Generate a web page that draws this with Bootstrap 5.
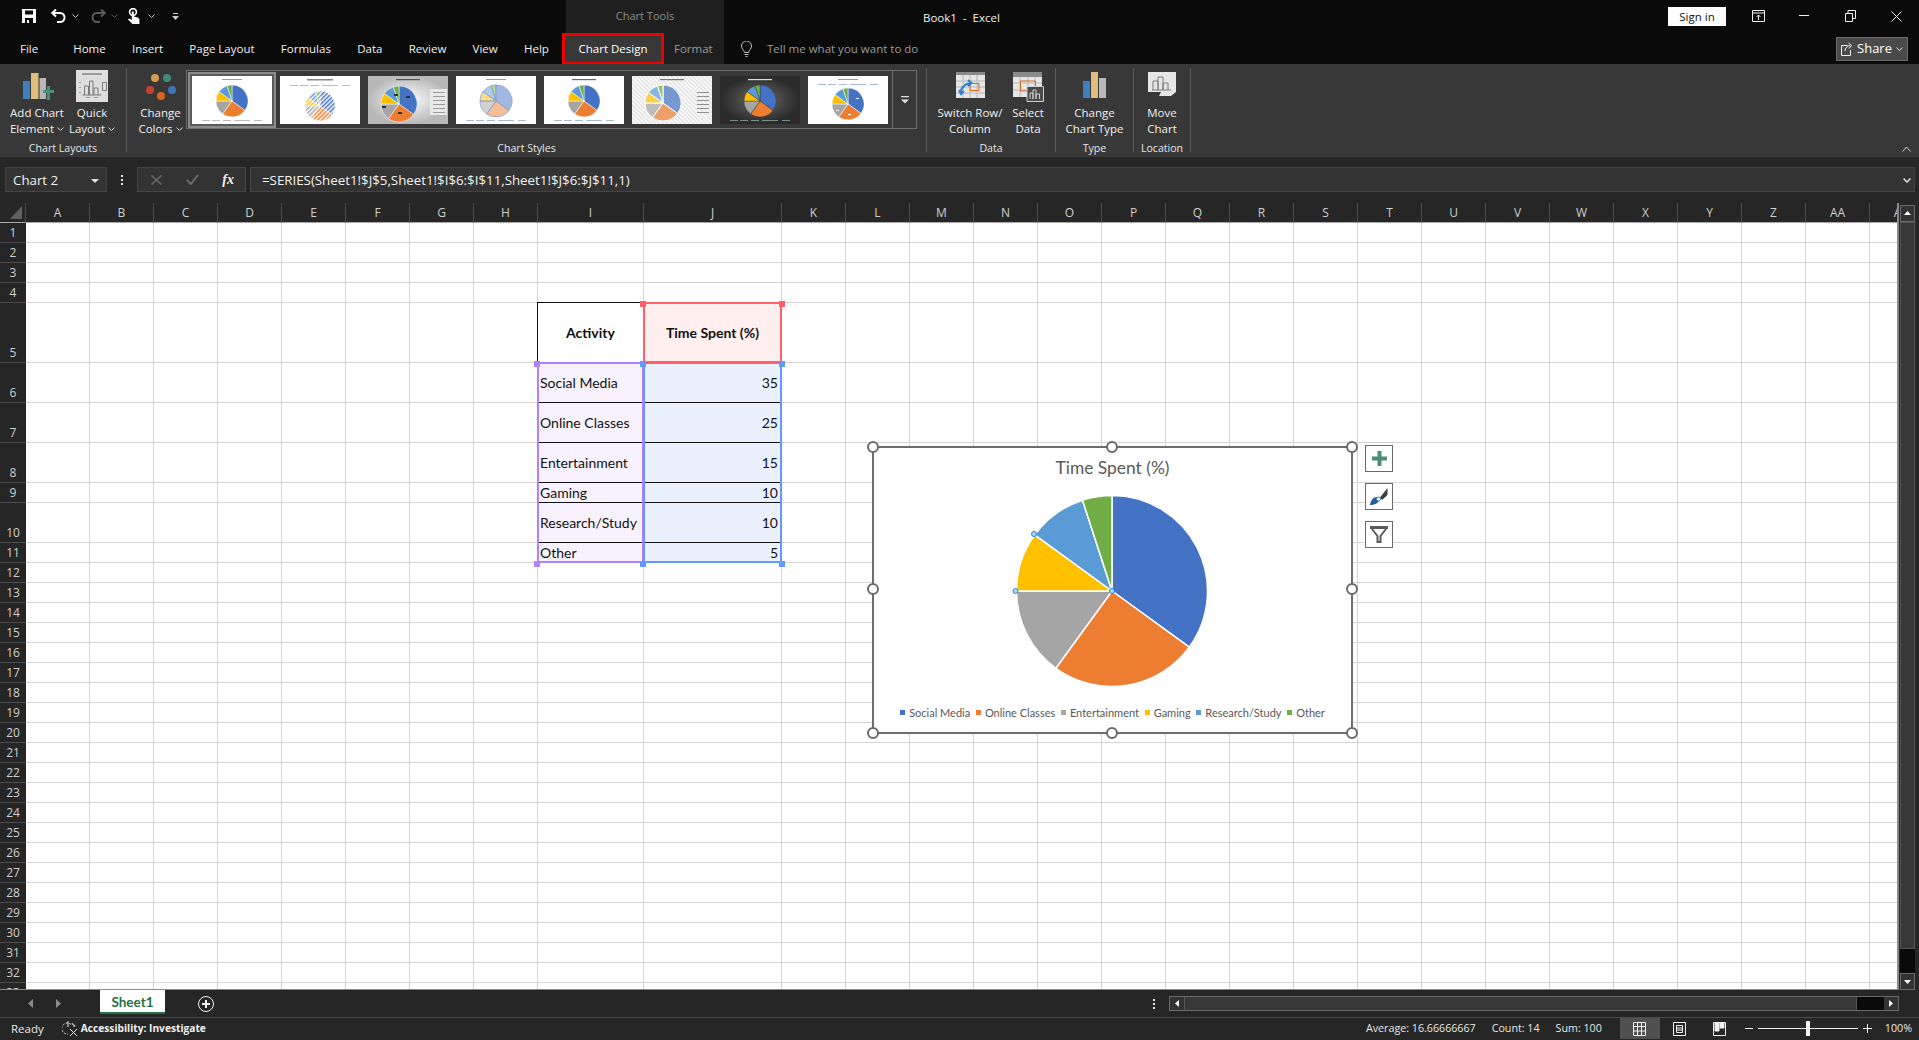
<!DOCTYPE html>
<html lang="en">

<head>
    <meta charset="UTF-8" />
    <title>Book1 - Excel</title>
    <link href="https://cdn.jsdelivr.net/npm/bootstrap@5.3.3/dist/css/bootstrap.min.css" rel="stylesheet" />
    <style>
        html, body { height: 100%; }

        body {
            background: #262626;
            color: #f0f0f0;
            font-family: "Open Sans", "Liberation Sans", sans-serif;
            font-size: 11.5px;
            overflow: hidden;
        }

        svg { display: block; }

        /* title bar + tabs */
        .xl-title { height: 32px; background: #0a0a0a; }
        .xl-qat { width: 566px; padding-left: 22px; }
        .xl-ctx-head { width: 158px; height: 32px; background: #1f1f1f; color: #8c8c8c; font-size: 11px; text-align: center; line-height: 32px; }
        .xl-doc { margin-left: 199px; color: #f0f0f0; font-size: 11.5px; padding-top: 3px; }
        .xl-signin { width: 58px; height: 19px; background: #fff; color: #111; font-size: 11.5px; line-height: 19px; text-align: center; margin-right: 9px; }
        .xl-win { width: 46px; height: 32px; }

        .xl-tabs { height: 32px; background: #0a0a0a; }
        .xl-tabs-main { width: 562px; padding-top: 2px; }
        .xl-tab { margin-right: 26.3px; white-space: nowrap; }
        .xl-tab-file { margin-left: 20px; margin-right: 35px; }
        .xl-ctx-wrap { width: 158px; height: 32px; margin-left: 4px; background: #1f1f1f; }
        .xl-tab-active { width: 102px; height: 32px; margin: 1px 10px 0 -4px; background: #383838; border: 3px solid #f00000; text-align: center; line-height: 26px; color: #fff; position: relative; flex: none; }
        .xl-ctx-tab { color: #9a9a9a; line-height: 33px; }
        .xl-tell { color: #9a9a9a; margin-left: 17px; gap: 15px; padding-top: 2px; }
        .xl-share { width: 72px; height: 24px; margin: 2px 11px 0 0; background: #4a4a4a; border: 1px solid #6a6a6a; gap: 4px; font-size: 13px; color: #fff; }

        /* ribbon */
        .xl-ribbon { height: 93px; background: #383838; position: relative; }
        .xl-group { height: 84px; margin-top: 4px; border-right: 1px solid #5c5c5c; }
        .xl-group-body { height: 69px; }
        .xl-group-name { height: 15px; line-height: 22px; font-size: 10.6px; text-align: center; color: #e6e6e6; white-space: nowrap; }
        .xl-btn { height: 69px; line-height: 16px; text-align: center; white-space: nowrap; }
        .xl-btn-icon { height: 37px; padding-top: 4px; flex: none; }
        .xl-btn-tall { padding-top: 2px; }
        .xl-caret { display: inline-block; width: 7px; height: 4px; margin-left: 3px; vertical-align: 2px; }

        .xl-gallery { width: 731px; height: 59px; margin-top: 2px; border: 1px solid #6e6e6e; }
        .xl-thumbs { padding: 1px 0 0 1px; gap: 0; width: 706px; }
        .xl-thumb { width: 88px; height: 56px; padding: 4px; }
        .xl-thumb-on { border: 2px solid #8c8c8c; padding: 2px; background: #5a5a5a; }
        .xl-more { width: 24px; height: 57px; border-left: 1px solid #6e6e6e; }
        .xl-collapse { position: absolute; right: 8px; bottom: 5px; }

        /* formula bar */
        .xl-fbar { height: 46px; padding: 10px 4px 0 5px; align-items: flex-start; }
        .xl-fbox { height: 25px; background: #333; border: 1px solid #444; padding-top: 1px; }
        .xl-name { width: 102px; padding: 2px 7px 0; font-size: 13.3px; }
        .xl-dots { width: 30px; height: 25px; }
        .xl-fbtns { width: 109px; margin-right: 4px; padding: 0 11px 0 13px; }
        .xl-formula { padding: 2px 3px 0 11px; font-size: 13.3px; color: #f2f2f2; white-space: nowrap; }

        /* sheet */
        .xl-main { height: 787px; }
        .xl-sheet { width: 1899px; height: 787px; position: relative; overflow: hidden; border-bottom: 1px solid #8a8a8a; border-right: 2px solid #8a8a8a; }
        .xl-grid { table-layout: fixed; width: 1934px; border-collapse: separate; border-spacing: 0; background: #fff; color: #111; font-family: Lato, "Liberation Sans", sans-serif; font-size: 14px; }
        .xl-grid td { border-right: 1px solid #d4d4d4; border-bottom: 1px solid #d4d4d4; padding: 0 2px; white-space: nowrap; overflow: hidden; line-height: 16px; }
        .xl-grid th { background: #262626; color: #cfcfcf; font-weight: 400; font-family: "Open Sans", sans-serif; font-size: 12px; text-align: center; padding: 0; }
        .xl-colhead th { height: 20px; border-right: 1px solid #4c4c4c; border-bottom: 1px solid #a8a8a8; }
        .xl-grid th.xl-rowhead { border-bottom: 1px solid #4c4c4c; vertical-align: bottom; line-height: 19px; }
        .xl-grid td.xl-hdr { font-weight: 700; text-align: center; border-bottom-color: #111; }
        .xl-grid td.xl-hdr-time { background: #ffefef; }
        .xl-grid td.xl-act { background: #f7f2fd; border-bottom-color: #111; border-right-color: #111; }
        .xl-grid td.xl-val { background: #ebf1fc; border-bottom-color: #111; text-align: right; padding-right: 3px; }
        .xl-outline { position: absolute; pointer-events: none; }
        .xl-out-black { left: 537px; top: 99px; width: 107px; height: 61px; border: 1px solid #111; border-width: 1px 0 0 1px; }
        .xl-out-red { left: 643px; top: 99px; width: 139px; height: 61px; border: 2px solid #ff6069; }
        .xl-out-purple { left: 537px; top: 159px; width: 107px; height: 201px; border: 2px solid #b381ff; }
        .xl-out-blue { left: 643px; top: 159px; width: 139px; height: 201px; border: 2px solid #6199ff; }
        .xl-sq { position: absolute; width: 6px; height: 6px; }
        .xl-sq-red { background: #ff6069; }
        .xl-sq-purple { background: #b381ff; }
        .xl-sq-blue { background: #6199ff; }

        .xl-chart { position: absolute; left: 872px; top: 243px; width: 481px; height: 288px; background: #fff; border: 2px solid #6e6e6e; font-family: Lato, "Liberation Sans", sans-serif; color: #595959; }
        .xl-chart-title { height: 43px; padding-top: 9px; text-align: center; font-size: 17.4px; line-height: 22px; }
        .xl-pie { padding-right: 2px; }
        .xl-legend { margin-top: 14px; gap: 5.7px; font-size: 11px; line-height: 16px; white-space: nowrap; }
        .xl-legend-dot { display: inline-block; width: 5px; height: 5px; margin-right: 4px; vertical-align: 2px; }
        .xl-handle { position: absolute; width: 12px; height: 12px; border-radius: 50%; border: 2px solid #6a6a6a; background: #fff; }
        .xl-side { position: absolute; left: 1365px; width: 28px; height: 27px; background: #fff; border: 1px solid #6a6a6a; }

        .xl-vscroll { width: 18px; padding: 2px 2px 0 1px; }
        .xl-sbtn { height: 17px; border: 1px solid #6a6a6a; background: #333; }
        .xl-vthumb { height: 730px; background: #383838; border: 1px solid #555; }
        .xl-vtrack { height: 24px; background: #0a0a0a; }

        /* sheet tabs and status */
        .xl-sheetbar { height: 28px; border-bottom: 1px solid #4a4a4a; }
        .xl-nav { width: 100px; padding: 0 39px 0 28px; }
        .xl-sheet-tab { width: 65px; height: 24px; background: #fff; color: #217346; border-bottom: 2px solid #217346; font-family: Lato, sans-serif; font-weight: 700; font-size: 13.5px; text-align: center; line-height: 24px; align-self: flex-start; }
        .xl-add { margin-left: 33px; }
        .xl-hscroll { width: 730px; height: 15px; margin-right: 20px; border: 1px solid #6a6a6a; }
        .xl-hdots { margin-right: 14px; }
        .xl-hbtn { width: 14px; height: 13px; background: #333; }
        .xl-hthumb { width: 674px; height: 13px; background: #383838; border: 1px solid #555; border-width: 0 1px; }
        .xl-htrack { width: 27px; height: 13px; background: #0a0a0a; }

        .xl-status { height: 21px; padding-left: 11px; color: #e6e6e6; font-size: 10.7px; white-space: nowrap; }
        .xl-ready { font-size: 11.5px; }
        .xl-acc { margin-left: 18px; gap: 3px; font-weight: 700; font-size: 10.2px; color: #f0f0f0; }
        .xl-stat { margin-right: 16px; }
        .xl-view { width: 40px; height: 21px; }
        .xl-view-on { background: #505050; margin-left: 2px; }
        .xl-zoom { gap: 5px; margin: 0 13px 0 5px; }
        .xl-slider { width: 100px; height: 1px; background: #f0f0f0; position: relative; }
        .xl-slider-knob { position: absolute; left: 48px; top: -7px; width: 4px; height: 15px; background: #f0f0f0; }
        .xl-pct { margin-right: 7px; }
    </style>
</head>

<body class="d-flex flex-column">

    <!-- title bar -->
    <div class="xl-title d-flex align-items-center">
        <div class="xl-qat d-flex align-items-center">
            <svg width="14" height="14" viewBox="0 0 14 14"><path fill="#fff" fill-rule="evenodd" d="M0 0h14v14H0zM3 1.500v4h8v-4zM3 9v5h2v-3h2v3h4V9z" /></svg>
            <svg style="margin-left:15px" width="15" height="14" viewBox="0 0 15 14" fill="none" stroke="#fff" stroke-width="2"><path d="M1 4h8a4.400 4.400 0 0 1 0 9H6M5 .5 1.200 4 5 7.500" /></svg>
            <svg style="margin-left:6px" width="7" height="4" viewBox="0 0 7 4" fill="none" stroke="#ccc"><path d="m.5.500 3 3 3-3" /></svg>
            <svg style="margin-left:12px" width="15" height="14" viewBox="0 0 15 14" fill="none" stroke="#5a5a5a" stroke-width="2"><path d="M14 4H6a4.400 4.400 0 0 0 0 9h3M10 .5 13.800 4 10 7.500" /></svg>
            <svg style="margin-left:5px" width="7" height="4" viewBox="0 0 7 4" fill="none" stroke="#5a5a5a"><path d="m.5.500 3 3 3-3" /></svg>
            <svg style="margin-left:10px" width="12" height="16" viewBox="0 0 12 16"><circle cx="5" cy="4" r="3.400" fill="none" stroke="#fff" stroke-width="1.600" /><path fill="#fff" d="M3.800 3.500h2v5l4 1 1.600 1.500V16H4.500L0 11.500l1-1 2.800 1.500z" /></svg>
            <svg style="margin-left:8px" width="7" height="4" viewBox="0 0 7 4" fill="none" stroke="#ccc"><path d="m.5.500 3 3 3-3" /></svg>
            <svg style="margin-left:17px" width="7" height="7" viewBox="0 0 7 7" fill="#ccc"><path d="M1 0h5v1H1zM0 3h7L3.500 7z" /></svg>
        </div>
        <div class="xl-ctx-head">Chart Tools</div>
        <div class="xl-doc">Book1&nbsp; -&nbsp; Excel</div>
        <div class="d-flex align-items-center ms-auto">
            <div class="xl-signin">Sign in</div>
            <div class="xl-win d-flex align-items-center justify-content-center"><svg width="13" height="12" viewBox="0 0 13 12" fill="none" stroke="#f0f0f0"><path d="M.5.500h12v11H.500zM.5 3h12M6.500 10V5M4.500 7l2-2 2 2" /></svg></div>
            <div class="xl-win d-flex align-items-center justify-content-center"><svg width="10" height="2" viewBox="0 0 10 2"><path fill="#f0f0f0" d="M0 0h10v1H0z" /></svg></div>
            <div class="xl-win d-flex align-items-center justify-content-center"><svg width="11" height="12" viewBox="0 0 11 12" fill="none" stroke="#f0f0f0"><path d="M.5 3.500h7v8h-7zM3 3.500V.5h7.500v8h-3" /></svg></div>
            <div class="xl-win d-flex align-items-center justify-content-center"><svg width="11" height="11" viewBox="0 0 11 11" stroke="#f0f0f0"><path d="m.5.500 10 10M10.500.5l-10 10" /></svg></div>
        </div>
    </div>

    <!-- tabs -->
    <div class="xl-tabs d-flex align-items-center">
        <div class="xl-tabs-main d-flex">
            <div class="xl-tab xl-tab-file">File</div>
            <div class="xl-tab">Home</div>
            <div class="xl-tab">Insert</div>
            <div class="xl-tab">Page Layout</div>
            <div class="xl-tab">Formulas</div>
            <div class="xl-tab">Data</div>
            <div class="xl-tab">Review</div>
            <div class="xl-tab">View</div>
            <div class="xl-tab">Help</div>
        </div>
        <div class="xl-ctx-wrap d-flex">
            <div class="xl-tab-active">Chart Design</div>
            <div class="xl-ctx-tab">Format</div>
        </div>
        <div class="xl-tell d-flex align-items-center">
            <svg width="11" height="17" viewBox="0 0 11 17" fill="none" stroke="#bdbdbd"><path d="M3.500 11.500C3.200 9 .5 8 .5 5a5 5 0 0 1 10 0c0 3-2.700 4-3 6.500zM3.500 13.500h4M4.500 15.500h2" /></svg>
            <span>Tell me what you want to do</span>
        </div>
        <div class="xl-share d-flex align-items-center justify-content-center ms-auto">
            <svg width="12" height="14" viewBox="0 0 12 14" fill="none" stroke="#f0f0f0"><path d="M6.500 3.500H.5v10h9V8M4 9c0-3 2-5 5-5.500M7.500 1 10.500 3.500 8 6.500" /></svg>
            <span>Share</span>
            <svg width="7" height="4" viewBox="0 0 7 4" fill="none" stroke="#e0e0e0"><path d="m.5.500 3 3 3-3" /></svg>
        </div>
    </div>

    <!-- ribbon -->
    <div class="xl-ribbon d-flex">
        <div class="xl-group" style="width:127px">
            <div class="xl-group-body d-flex" style="padding-left:9px">
                <div class="xl-btn d-flex flex-column align-items-center" style="width:56px">
                    <div class="xl-btn-icon"><svg width="34" height="31" viewBox="0 0 34 31"><path fill="#3f7fc1" d="M3 9h7v18H3z" /><path fill="#e0bd7c" d="M11 1h7.500v26H11z" /><path fill="#b8b8b8" d="M19.500 6H26v21h-6.500z" /><path fill="#4b8f77" d="M23 18h4v-4h3v4h4v3h-4v7h-3v-7h-4z" /></svg></div>
                    <div>Add Chart</div>
                    <div>Element<svg class="xl-caret d-inline-block" viewBox="0 0 7 4" fill="none" stroke="#ddd"><path d="m.5.500 3 3 3-3" /></svg></div>
                </div>
                <div class="xl-btn d-flex flex-column align-items-center" style="width:54px">
                    <div class="xl-btn-icon xl-btn-tall"><svg width="32" height="33" viewBox="0 0 32 33"><path fill="#dedede" d="M0 0h32v32H0z" /><path fill="#9c9c9c" d="M6 3h20v2H6zM3 12h2v1H3zM3 17h2v1H3zM3 22h2v1H3zM10 27h4v1h-4zM18 27h4v1h-4z" /><path fill="none" stroke="#7a7a7a" d="M6.500 25h19M8.500 25v-9h4v9M13.500 25V11h3.500v14M18 25v-7h4v7M26.500 12.500h4v8h-4z" /></svg></div>
                    <div>Quick</div>
                    <div>Layout<svg class="xl-caret d-inline-block" viewBox="0 0 7 4" fill="none" stroke="#ddd"><path d="m.5.500 3 3 3-3" /></svg></div>
                </div>
            </div>
            <div class="xl-group-name">Chart Layouts</div>
        </div>

        <div class="xl-group" style="width:800px">
            <div class="xl-group-body d-flex" style="padding-left:8px">
                <div class="xl-btn d-flex flex-column align-items-center" style="width:51px">
                    <div class="xl-btn-icon"><svg width="30" height="33" viewBox="0 0 30 33"><circle cx="9" cy="6" r="4" fill="#d39d4e" /><circle cx="21" cy="6" r="4" fill="#3e8a77" /><circle cx="4" cy="18" r="4" fill="#c8412c" /><circle cx="26" cy="18" r="4" fill="#3a76bb" /><circle cx="15" cy="24" r="4" fill="#d8661c" /></svg></div>
                    <div>Change</div>
                    <div>Colors<svg class="xl-caret d-inline-block" viewBox="0 0 7 4" fill="none" stroke="#ddd"><path d="m.5.500 3 3 3-3" /></svg></div>
                </div>
                <div class="xl-gallery d-flex">
                    <div class="xl-thumbs d-flex" id="thumbs"></div>
                    <div class="xl-more d-flex align-items-center justify-content-center">
                        <svg width="8" height="8" viewBox="0 0 8 8" fill="#e0e0e0"><path d="M0 0h8v1.300H0zM0 3.500h8L4 7.500z" /></svg>
                    </div>
                </div>
            </div>
            <div class="xl-group-name">Chart Styles</div>
        </div>

        <div class="xl-group" style="width:129px">
            <div class="xl-group-body d-flex" style="padding-left:8px">
                <div class="xl-btn d-flex flex-column align-items-center" style="width:70px">
                    <div class="xl-btn-icon"><svg width="29" height="26" viewBox="0 0 29 26"><path fill="#e6e6e6" d="M0 0h29v26H0z" /><path fill="#8a8a8a" d="M0 0h29v3H0z" /><path fill="none" stroke="#b8b8b8" d="M0 9h29M0 15h29M0 21h29M7 3v23M14 3v23M21 3v23" /><path fill="none" stroke="#d8661c" d="M14 11.500h9v7h-9z" /><path fill="none" stroke="#2f80cf" stroke-width="2" d="M5 22c-1-5 3-10 9-11M12 8l3.500 3-3.500 3M3 18l2 4 3-3" /></svg></div>
                    <div>Switch Row/</div>
                    <div>Column</div>
                </div>
                <div class="xl-btn d-flex flex-column align-items-center" style="width:46px">
                    <div class="xl-btn-icon"><svg width="31" height="30" viewBox="0 0 31 30"><path fill="#e6e6e6" d="M0 0h29v25H0z" /><path fill="#8a8a8a" d="M0 0h29v5H0z" /><path fill="none" stroke="#b8b8b8" d="M0 11h29M0 18h29M7 5v20M15 5v20M22 5v20" /><path fill="none" stroke="#d8661c" d="M7.500 9h15v10h-15z" /><path fill="#4a4a4a" stroke="#cfcfcf" d="M14 14.500h16.500v15H14z" /><path fill="none" stroke="#cfcfcf" d="M17 27v-6h3v6M20 27v-9h3v9M23 27v-5h3.500v5" /></svg></div>
                    <div>Select</div>
                    <div>Data</div>
                </div>
            </div>
            <div class="xl-group-name">Data</div>
        </div>

        <div class="xl-group" style="width:78px">
            <div class="xl-group-body d-flex justify-content-center">
                <div class="xl-btn d-flex flex-column align-items-center">
                    <div class="xl-btn-icon"><svg width="24" height="28" viewBox="0 0 24 28"><path fill="#3f7fc1" d="M0 9h7v17H0z" /><path fill="#e0bd7c" d="M8 0h7v26H8z" /><path fill="#b8b8b8" d="M16 6h7v20h-7z" /></svg></div>
                    <div>Change</div>
                    <div>Chart Type</div>
                </div>
            </div>
            <div class="xl-group-name">Type</div>
        </div>

        <div class="xl-group" style="width:57px">
            <div class="xl-group-body d-flex justify-content-center">
                <div class="xl-btn d-flex flex-column align-items-center">
                    <div class="xl-btn-icon"><svg width="28" height="26" viewBox="0 0 28 26"><path fill="#e6e6e6" d="M0 0h28v20l-5 4H11l2-4H0z" /><path fill="none" stroke="#7a7a7a" d="M5 18v-9h5v9M10 18V5h5v13M15 18v-7h5v7M4 18h19" /></svg></div>
                    <div>Move</div>
                    <div>Chart</div>
                </div>
            </div>
            <div class="xl-group-name">Location</div>
        </div>

        <svg class="xl-collapse" width="9" height="6" viewBox="0 0 9 6" fill="none" stroke="#d0d0d0"><path d="m.5 5.500 4-4.500 4 4.500" /></svg>
    </div>

    <!-- formula bar -->
    <div class="xl-fbar d-flex">
        <div class="xl-fbox xl-name d-flex align-items-center justify-content-between">
            <span>Chart 2</span>
            <svg width="8" height="4" viewBox="0 0 8 4" fill="#e0e0e0"><path d="M0 0h8L4 4z" /></svg>
        </div>
        <div class="xl-dots d-flex align-items-center justify-content-center">
            <svg width="2" height="10" viewBox="0 0 2 10" fill="#e0e0e0"><path d="M0 0h2v2H0zM0 4h2v2H0zM0 8h2v2H0z" /></svg>
        </div>
        <div class="xl-fbox xl-fbtns d-flex align-items-center justify-content-between">
            <svg width="11" height="10" viewBox="0 0 11 10" stroke="#6a6a6a" stroke-width="1.500"><path d="m.5.500 10 9M10.500.5l-10 9" /></svg>
            <svg width="13" height="11" viewBox="0 0 13 11" fill="none" stroke="#6a6a6a" stroke-width="2"><path d="m.8 6 4 4L12 .8" /></svg>
            <span class="fst-italic fw-bold" style="font-family:'Liberation Serif',serif;font-size:14px">fx</span>
        </div>
        <div class="xl-fbox xl-formula flex-grow-1 d-flex align-items-center justify-content-between">
            <span>=SERIES(Sheet1!$J$5,Sheet1!$I$6:$I$11,Sheet1!$J$6:$J$11,1)</span>
            <svg width="8" height="5" viewBox="0 0 8 5" fill="none" stroke="#e0e0e0" stroke-width="1.500"><path d="m.5.500 3.500 3.500 3.500-3.500" /></svg>
        </div>
    </div>

    <!-- worksheet -->
    <div class="xl-main d-flex">
        <div class="xl-sheet">
            <table class="xl-grid" id="grid"></table>

            <div class="xl-outline xl-out-black"></div>
            <div class="xl-outline xl-out-purple"></div>
            <div class="xl-outline xl-out-blue"></div>
            <div class="xl-outline xl-out-red"></div>
            <div id="corners"></div>

            <div class="xl-chart">
                <div class="xl-chart-title">Time Spent (%)</div>
                <div class="xl-pie d-flex justify-content-center" id="bigPie"></div>
                <div class="xl-legend d-flex justify-content-center" id="legend"></div>
            </div>
            <div id="handles"></div>

            <div class="xl-side d-flex align-items-center justify-content-center" style="top:242px">
                <svg width="15" height="15" viewBox="0 0 15 15"><path fill="#4b8f77" d="M5.500 0h4v5.500H15v4H9.500V15h-4V9.500H0v-4h5.500z" /></svg>
            </div>
            <div class="xl-side d-flex align-items-center justify-content-center" style="top:280px">
                <svg width="18" height="18" viewBox="0 0 18 18"><path fill="#3f3f3f" d="M17.500 0v7l-5.500 5-2-2.500z" /><path fill="#1f5fa0" d="M0 17c1-6 5-9 8-7.500l1 3c-1 3-5 4.500-9 4.500z" /><circle cx="8.500" cy="11" r="2" fill="#fff" stroke="#3f7fc1" /></svg>
            </div>
            <div class="xl-side d-flex align-items-center justify-content-center" style="top:318px">
                <svg width="18" height="17" viewBox="0 0 18 17"><path fill="#5a5a5a" d="M0 0h18v3H0z" /><path fill="none" stroke="#5a5a5a" stroke-width="2" d="M2 3l5.500 7v6h3v-6L16 3" /></svg>
            </div>
        </div>
        <div class="xl-vscroll d-flex flex-column">
            <div class="xl-sbtn d-flex align-items-center justify-content-center"><svg width="7" height="4" viewBox="0 0 7 4" fill="#fff"><path d="M0 4h7L3.500 0z" /></svg></div>
            <div class="xl-vthumb"></div>
            <div class="xl-vtrack"></div>
            <div class="xl-sbtn d-flex align-items-center justify-content-center"><svg width="7" height="4" viewBox="0 0 7 4" fill="#fff"><path d="M0 0h7L3.500 4z" /></svg></div>
        </div>
    </div>

    <!-- sheet tabs -->
    <div class="xl-sheetbar d-flex align-items-center">
        <div class="xl-nav d-flex justify-content-between">
            <svg width="5" height="9" viewBox="0 0 5 9" fill="#8a8a8a"><path d="M5 0v9L0 4.500z" /></svg>
            <svg width="5" height="9" viewBox="0 0 5 9" fill="#8a8a8a"><path d="M0 0v9l5-4.500z" /></svg>
        </div>
        <div class="xl-sheet-tab">Sheet1</div>
        <svg class="xl-add" width="16" height="16" viewBox="0 0 16 16" fill="none" stroke="#f0f0f0"><circle cx="8" cy="8" r="7.500" /><path stroke-width="2" d="M8 4v8M4 8h8" /></svg>
        <svg class="xl-hdots ms-auto" width="2" height="10" viewBox="0 0 2 10" fill="#e0e0e0"><path d="M0 0h2v2H0zM0 4h2v2H0zM0 8h2v2H0z" /></svg>
        <div class="xl-hscroll d-flex">
            <div class="xl-hbtn d-flex align-items-center justify-content-center"><svg width="4" height="7" viewBox="0 0 4 7" fill="#fff"><path d="M4 0v7L0 3.500z" /></svg></div>
            <div class="xl-hthumb"></div>
            <div class="xl-htrack"></div>
            <div class="xl-hbtn d-flex align-items-center justify-content-center"><svg width="4" height="7" viewBox="0 0 4 7" fill="#fff"><path d="M0 0v7l4-3.500z" /></svg></div>
        </div>
    </div>

    <!-- status bar -->
    <div class="xl-status d-flex align-items-center">
        <span class="xl-ready">Ready</span>
        <div class="xl-acc d-flex align-items-center">
            <svg width="16" height="16" viewBox="0 0 16 16" fill="none" stroke="#e6e6e6"><path stroke-dasharray="2 1.500" d="M9 3.500A5.500 5.500 0 1 0 6 13" /><path d="M6 0v6M10 2l1 2 2 .5-1.500 1.500M8 8l7 7M15 8l-7 7" /></svg>
            <span>Accessibility: Investigate</span>
        </div>
        <div class="d-flex align-items-center ms-auto">
            <span class="xl-stat">Average: 16.66666667</span>
            <span class="xl-stat">Count: 14</span>
            <span class="xl-stat">Sum: 100</span>
            <div class="xl-view xl-view-on d-flex align-items-center justify-content-center"><svg width="13" height="14" viewBox="0 0 13 14" fill="none" stroke="#f0f0f0"><path d="M.5.500h12v13H.5zM.5 4.500h12M.5 9h12M4.500.5v13M8.500.5v13" /></svg></div>
            <div class="xl-view d-flex align-items-center justify-content-center"><svg width="13" height="14" viewBox="0 0 13 14" fill="none" stroke="#f0f0f0"><path d="M.5.500h12v13H.5zM3.500 3.500h6v7h-6zM3.500 6h6M3.500 8h6" /></svg></div>
            <div class="xl-view d-flex align-items-center justify-content-center"><svg width="13" height="14" viewBox="0 0 13 14" fill="none" stroke="#f0f0f0"><path d="M.5.500h12v13H.5z" /><path fill="#f0f0f0" d="M2 1h4v8H2zM7 1h4v5H7z" /></svg></div>
            <div class="xl-zoom d-flex align-items-center">
                <svg width="8" height="2" viewBox="0 0 8 2"><path fill="#f0f0f0" d="M0 0h8v1H0z" /></svg>
                <div class="xl-slider"><div class="xl-slider-knob"></div></div>
                <svg width="9" height="9" viewBox="0 0 9 9"><path fill="#f0f0f0" d="M4 0h1v4h4v1H5v4H4V5H0V4h4z" /></svg>
            </div>
            <span class="xl-pct">100%</span>
        </div>
    </div>

    <script src="https://cdn.jsdelivr.net/npm/bootstrap@5.3.3/dist/js/bootstrap.bundle.min.js"></script>
    <script>
        const data = [
            ["Social Media", 35], ["Online Classes", 25], ["Entertainment", 15],
            ["Gaming", 10], ["Research/Study", 10], ["Other", 5]
        ];
        const colors = ["#4472c4", "#ed7d31", "#a5a5a5", "#ffc000", "#5b9bd5", "#70ad47"];

        // pie wedges, clockwise from 12 o'clock
        function wedges(cx, cy, r, opts = {}) {
            const fills = opts.fills || colors;
            let angle = -Math.PI / 2, out = "";
            data.forEach((d, i) => {
                const next = angle + d[1] / 100 * Math.PI * 2;
                const x1 = cx + r * Math.cos(angle), y1 = cy + r * Math.sin(angle);
                const x2 = cx + r * Math.cos(next), y2 = cy + r * Math.sin(next);
                const large = next - angle > Math.PI ? 1 : 0;
                out += `<path d="M${cx} ${cy}L${x1.toFixed(2)} ${y1.toFixed(2)}A${r} ${r} 0 ${large} 1 ${x2.toFixed(2)} ${y2.toFixed(2)}Z"
                    fill="${fills[i]}" fill-opacity="${opts.alpha || 1}" stroke="${opts.stroke || "#fff"}" stroke-width="${opts.sw === undefined ? .5 : opts.sw}"/>`;
                angle = next;
            });
            return out;
        }

        const bar = (x, y, w, h, c) => `<rect x="${x}" y="${y}" width="${w}" height="${h}" fill="${c}"/>`;
        const legendRow = (y, c) => [10, 20, 31, 42, 50, 62].map(x => bar(x, y, 8, .8, c)).join("");
        const sideLegend = (x, c) => [16, 20, 24, 28, 32, 36].map(y => bar(x, y, 12, .8, c)).join("");
        const hatch = colors.map((c, i) => `<pattern id="h${i}" width="3" height="3" patternUnits="userSpaceOnUse" patternTransform="rotate(45)"><rect width="3" height="3" fill="#fff"/><rect width="1.500" height="3" fill="${c}"/></pattern>`).join("");

        const styles = [
            `<rect width="80" height="48" fill="#fff"/>${bar(30, 3, 20, 1, "#999")}${wedges(40, 25, 16)}${legendRow(44, "#aaa")}`,
            `<rect width="80" height="48" fill="#fff"/>${bar(27, 3, 26, 1.500, "#888")}${legendRow(9, "#aaa")}${wedges(40, 30, 15, { fills: colors.map((c, i) => `url(#h${i})`) })}`,
            `<rect width="80" height="48" fill="url(#g3)"/>${bar(28, 3, 24, 1.200, "#555")}${wedges(31, 28, 18)}<rect x="62" y="13" width="17" height="26" fill="#e8e8e8"/>${sideLegend(65, "#888")}${bar(26, 18, 4, 2, "#333")}${bar(38, 20, 4, 2, "#333")}${bar(30, 36, 4, 2, "#333")}${bar(14, 30, 4, 2, "#333")}`,
            `<rect width="80" height="48" fill="#fff"/>${bar(30, 3, 20, 1, "#999")}${wedges(40, 25, 16, { alpha: .5, sw: .8, stroke: "#8aa0d0" })}${legendRow(44, "#8fa8c8")}`,
            `<rect width="80" height="48" fill="#fff"/>${bar(28, 3, 24, 1.200, "#666")}${wedges(40, 25, 16)}${legendRow(44, "#8fa8c8")}`,
            `<rect width="80" height="48" fill="url(#stripe)"/>${bar(28, 3, 24, 1.200, "#777")}${wedges(31, 27, 18, { alpha: .7, sw: 1 })}${sideLegend(65, "#777")}`,
            `<rect width="80" height="48" fill="url(#g7)"/>${bar(28, 3, 24, 1.200, "#ddd")}${wedges(40, 25, 16, { sw: .4, stroke: "#333" })}${legendRow(44, "#8fa8a8")}`,
            `<rect width="80" height="48" fill="#fff"/>${bar(30, 3, 20, 1, "#999")}${legendRow(8, "#8fa8c8")}${wedges(40, 28, 16)}${bar(48, 22, 3, 1, "#fff")}${bar(40, 38, 3, 1, "#fff")}${bar(28, 34, 3, 1, "#fff")}`
        ];
        const defs = `<defs>${hatch}
            <radialGradient id="g3"><stop offset="0" stop-color="#fff"/><stop offset="1" stop-color="#b8b8b8"/></radialGradient>
            <radialGradient id="g7"><stop offset="0" stop-color="#6a6a6a"/><stop offset="1" stop-color="#2a2a2a"/></radialGradient>
            <pattern id="stripe" width="3" height="3" patternUnits="userSpaceOnUse" patternTransform="rotate(-45)"><rect width="3" height="3" fill="#fff"/><rect width="1.500" height="3" fill="#e0e0e0"/></pattern>
        </defs>`;

        document.getElementById("thumbs").innerHTML = `<svg width="0" height="0" class="position-absolute">${defs}</svg>` + styles.map((s, i) =>
            `<div class="xl-thumb ${i === 0 ? "xl-thumb-on" : ""}"><svg width="80" height="48" viewBox="0 0 80 48">${s}</svg></div>`).join("");

        // the big chart
        const pick = (x, y) => `<circle cx="${x}" cy="${y}" r="2.500" fill="#a8daf5" stroke="#1e88d8"/>`;
        document.getElementById("bigPie").innerHTML = `<svg width="200" height="200" viewBox="0 0 200 200">${wedges(100, 100, 95.500, { sw: 1.500 })}${pick(100, 100)}${pick(3.500, 100)}${pick(22, 43)}</svg>`;
        document.getElementById("legend").innerHTML = data.map((d, i) =>
            `<span><span class="xl-legend-dot" style="background:${colors[i]}"></span>${d[0]}</span>`).join("");

        // worksheet
        const cols = [];
        for (let i = 0; i < 28; i++) cols.push(i < 26 ? String.fromCharCode(65 + i) : "A" + String.fromCharCode(39 + i));
        const widths = cols.map(c => c === "I" ? 106 : c === "J" ? 138 : 64);
        const heights = { 5: 60, 6: 40, 7: 40, 8: 40, 10: 40 };

        let html = `<colgroup><col style="width:26px">${widths.map(w => `<col style="width:${w}px">`).join("")}</colgroup>`;
        html += `<thead><tr class="xl-colhead"><th><svg width="26" height="19" viewBox="0 0 26 19"><path fill="#5f5f5f" d="M22 3v13H10z"/></svg></th>${cols.map(c => `<th>${c}</th>`).join("")}</tr></thead><tbody>`;
        for (let r = 1; r <= 33; r++) {
            const h = heights[r] || 20;
            html += `<tr style="height:${h}px"><th class="xl-rowhead">${r}</th>`;
            cols.forEach(c => {
                let cls = "", txt = "";
                if (r === 5 && c === "I") { cls = "xl-hdr"; txt = "Activity"; }
                if (r === 5 && c === "J") { cls = "xl-hdr xl-hdr-time"; txt = "Time Spent (%)"; }
                if (r >= 6 && r <= 11 && c === "I") { cls = "xl-act"; txt = data[r - 6][0]; }
                if (r >= 6 && r <= 11 && c === "J") { cls = "xl-val"; txt = data[r - 6][1]; }
                html += `<td class="${cls}">${txt}</td>`;
            });
            html += "</tr>";
        }
        document.getElementById("grid").innerHTML = html + "</tbody>";

        // selection squares around the chart's source ranges
        const squares = [
            ["red", 643, 99], ["red", 782, 99],
            ["purple", 537, 159], ["purple", 537, 359],
            ["blue", 643, 159], ["blue", 782, 159], ["blue", 643, 359], ["blue", 782, 359]
        ];
        document.getElementById("corners").innerHTML = squares.map(s =>
            `<div class="xl-sq xl-sq-${s[0]}" style="left:${s[1] - 3}px;top:${s[2] - 1}px"></div>`).join("");

        // chart resize handles
        const hx = [873, 1112, 1352], hy = [244, 386, 530];
        let handles = "";
        hy.forEach((y, j) => hx.forEach((x, i) => {
            if (i === 1 && j === 1) return;
            handles += `<div class="xl-handle" style="left:${x - 6}px;top:${y - 6}px"></div>`;
        }));
        document.getElementById("handles").innerHTML = handles;
    </script>

</body>

</html>
